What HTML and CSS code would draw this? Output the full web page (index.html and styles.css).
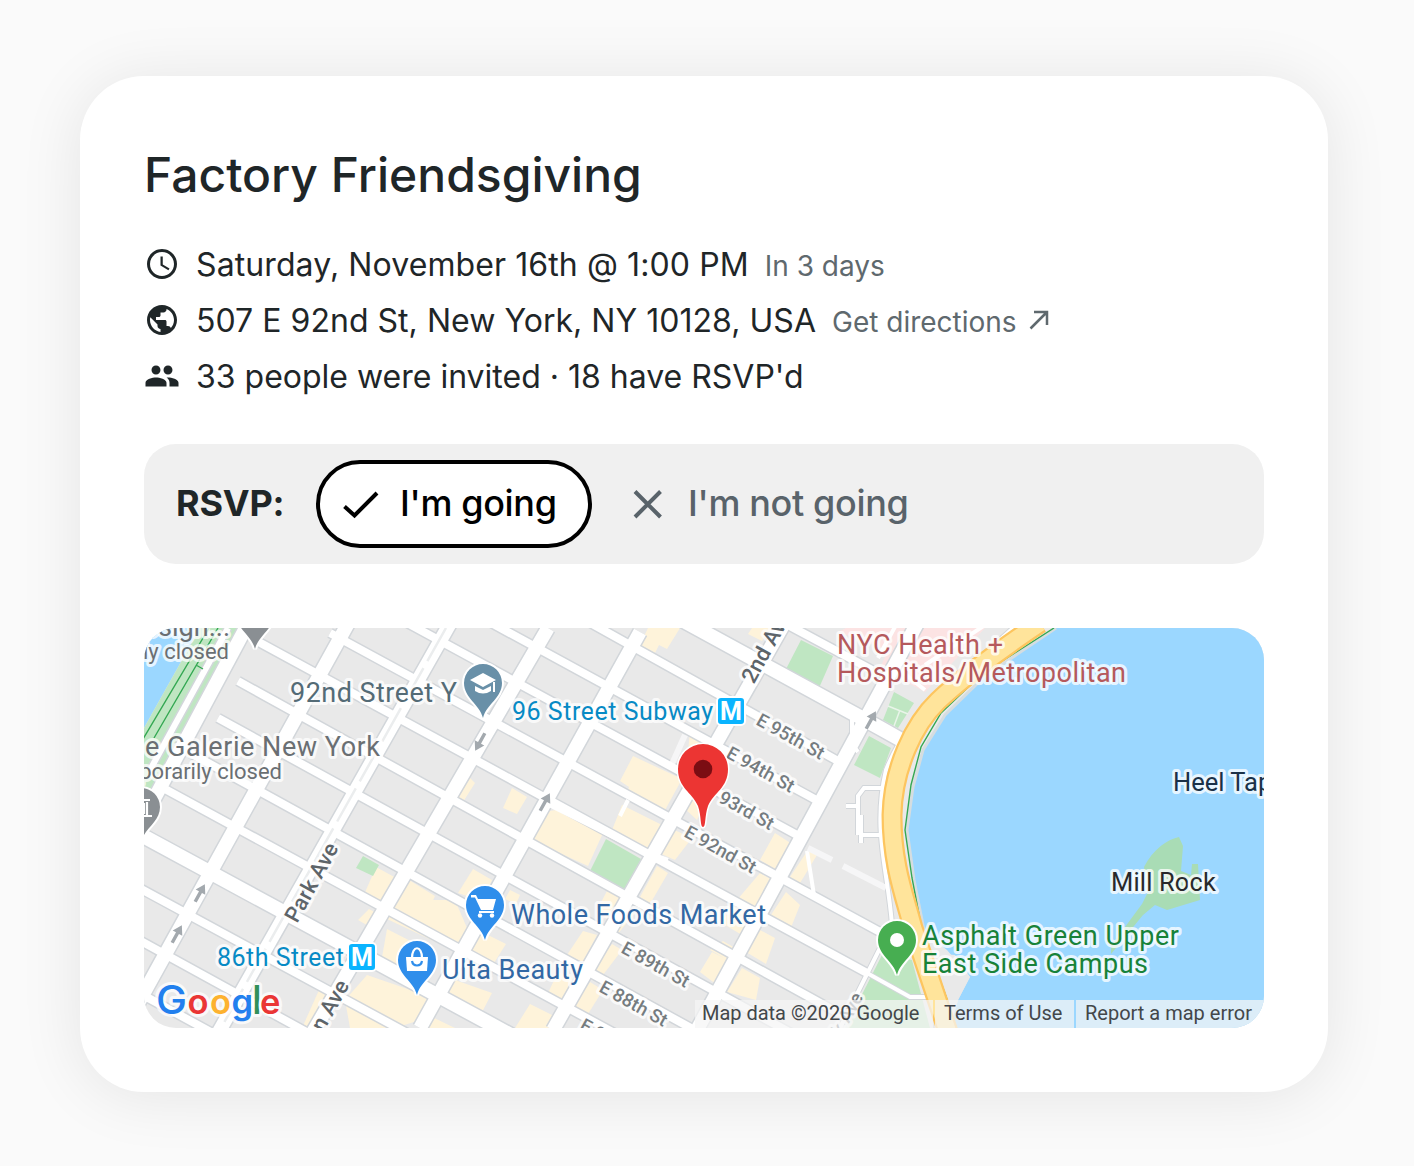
FILE: index.html
```html
<!DOCTYPE html>
<html lang="en">
<head>
<meta charset="utf-8">
<title>Factory Friendsgiving</title>
<link rel="stylesheet" href="styles.css">
</head>
<body>
<main class="card">
  <h1 class="title">Factory Friendsgiving</h1>
  <ul class="details">
    <li class="detail">
      <svg class="detail-icon" viewBox="0 0 24 24"><path d="M11.99 2C6.47 2 2 6.48 2 12s4.47 10 9.990 10C17.52 22 22 17.52 22 12S17.52 2 11.99 2zM12 20c-4.42 0-8-3.58-8-8s3.58-8 8-8 8 3.58 8 8-3.58 8-8 8zm.5-13H11v6l5.25 3.15.75-1.23-4.5-2.67z"/></svg>
      <span class="when">Saturday, November 16th @ 1:00 PM</span>
      <span class="note">In 3 days</span>
    </li>
    <li class="detail">
      <svg class="detail-icon" viewBox="0 0 24 24"><path d="M12 2C6.48 2 2 6.48 2 12s4.48 10 10 10 10-4.48 10-10S17.52 2 12 2zm-1 17.93c-3.95-.49-7-3.85-7-7.93 0-.62.08-1.21.21-1.79L9 15v1c0 1.1.9 2 2 2v1.93zm6.9-2.54c-.26-.81-1-1.39-1.9-1.39h-1v-3c0-.55-.45-1-1-1H8v-2h2c.55 0 1-.45 1-1V7h2c1.1 0 2-.9 2-2v-.41c2.93 1.19 5 4.06 5 7.410 0 2.08-.8 3.97-2.1 5.39z"/></svg>
      <span class="where">507 E 92nd St, New York, NY 10128, USA</span>
      <a class="note">Get directions <svg class="out-icon" viewBox="0 0 20 20"><path d="M1.500 18.500 17.500 2.500M5 2H18V15"/></svg></a>
    </li>
    <li class="detail">
      <svg class="detail-icon" viewBox="0 0 24 24"><path d="M16 11c1.66 0 2.99-1.34 2.99-3S17.66 5 16 5c-1.66 0-3 1.34-3 3s1.34 3 3 3zm-8 0c1.66 0 2.99-1.34 2.99-3S9.66 5 8 5C6.34 5 5 6.34 5 8s1.34 3 3 3zm0 2c-2.33 0-7 1.17-7 3.5V19h14v-2.5c0-2.33-4.67-3.5-7-3.5zm8 0c-.29 0-.62.02-.97.05 1.16.84 1.97 1.97 1.97 3.45V19h6v-2.5c0-2.33-4.67-3.5-7-3.5z"/></svg>
      <span>33 people were invited · 18 have RSVP'd</span>
    </li>
  </ul>

  <section class="rsvp">
    <strong class="rsvp-label">RSVP:</strong>
    <button class="choice chosen"><svg class="choice-icon" viewBox="0 0 40 40"><path d="M4.500 22.500 14.500 31.500 37 9"/></svg><span>I'm going</span></button>
    <button class="choice"><svg class="choice-icon" viewBox="0 0 40 40"><path d="M7 7.500 32.500 33M32.500 7.500 7 33"/></svg><span>I'm not going</span></button>
  </section>

  <section class="map">
    <svg class="map-canvas" viewBox="144 628 1120 400">
      <defs>
        <path id="pin" d="M0 35C-3.500 21-19 15-19 0A19 19 0 1 1 19 0C19 15 3.500 21 0 35Z"/>
        <path id="arrow" d="M-1.700 10V-1H-5.500L0-10 5.500-1H1.700V10Z"/>
        <g id="streets">
          <path d="M760 610 872 670M470 558 560 606 838 761M440 595 820 802M400 619 797 835M330 633 880 932M255 640 867 973M238 681 840 1014M218 718 800 1038M190 753 720 1044M165 789 640 1047M130 883 420 1040M130 935 330 1045M130 988 240 1048"/>
        </g>
        <g id="wide-streets"><path d="M660 608 880 728 912 746M130 829 520 1040"/></g>
        <g id="avenues">
          <path d="M350 620 130 1018M548 628 313 1032M640 632 420 1028"/>
          <path d="M452 620 217 1035M789 615 553 1030M918 622 698 1028"/>
          <path d="M250 620 138 829"/>
        </g>
        <g id="lanes"><path d="M852 718V744L858 752M893 922 838 1032M892 925C888 870 872 830 886 770 900 735 915 715 1020 622M867 973 910 997H928M886 788H864L858 796V835M846 806H858M861 815V843M861 835H880"/></g>
      </defs>

      <rect class="ground" x="144" y="628" width="1120" height="400"/>
      <!-- reservoir and park -->
      <path class="water" d="M144 628H200L144 728Z"/>
      <path class="park" d="M200 628H241L144 806V728Z"/>
      <path class="park-border" d="M228 628 150 770"/>
      <path class="park-edge" d="M228 628 150 770"/>
      <path class="park-path" d="M209 628 143 739M218 628 154 738M196 665 203 669"/>

      <!-- retail blocks -->
      <path class="retail" d="M648 628H680L667 649 659 645 655 653 640 645Z"/>
      <path class="retail" d="M752 628H771L762 641 748 634Z"/>
      <path class="retail" d="M633 756 682 779 664 812 627 793 629 787 620 781Z"/>
      <path class="retail" d="M690 731 708 740 701 752H688ZM684 808 692 795 705 802 697 820Z"/>
      <path class="retail" d="M543 812 556 810 603 833 588 866 531 840ZM622 805 662 825 650 850 612 830ZM470 778 475 783 463 802 457 799ZM512 788 527 797 517 814 503 808Z"/>
      <path class="retail" d="M376 867 398 879 381 904 363 897ZM369 909 380 915 372 928 358 920Z"/>
      <path class="retail" d="M409 880 435 896 425 918 452 920 440 944 387 919ZM387 929 430 951 410 978 381 963Z"/>
      <path class="retail" d="M473 869 492 880 482 901 458 893ZM428 900 455 900 470 935 448 948 400 924Z"/>
      <path class="retail" d="M478 930 506 944 487 974 467 957ZM455 980 492 993 480 1016 445 1000ZM530 1004 558 1018 552 1028H515Z"/>
      <path class="retail" d="M367 975 428 996 420 1020 395 1028H350L345 1000ZM319 990 328 995 310 1028H302ZM430 1016 455 1028H424Z"/>
      <path class="retail" d="M597 935 583 962 567 955 583 931ZM573 978 563 1003 548 993 558 972ZM607 891 622 898 610 922 597 910ZM510 890 520 895 516 904 505 899Z"/>
      <path class="retail" d="M670 828 692 838 675 860 657 852ZM657 866 668 873 650 904 640 897ZM625 908 634 914 617 935 612 930ZM612 944 622 950 603 975 593 970ZM590 982 603 990 588 1014 574 1006Z"/>
      <path class="retail" d="M775 833 795 846 780 872 760 860ZM760 873 774 881 757 912 737 900ZM738 903 750 912 742 935 720 922ZM723 941 742 952 731 962 710 950ZM712 952 732 962 717 985 700 972Z"/>
      <path class="retail" d="M808 850 817 855 797 888 788 880ZM786 892 800 905 790 930 769 918ZM760 930 775 938 766 964 746 952ZM742 968 760 978 756 1000 727 992Z"/>

      <!-- greens, hospital -->
      <path class="park" d="M801 640 833 656 819 688 785 671ZM606 839 641 859 625 891 590 871ZM869 736 891 748 880 778 854 765ZM363 856 379 865 373 876 356 868Z"/>
      <path class="hospital" d="M846 628H985L925 692 880 668 888 650 838 632Z"/>
      <path class="lane" d="M878 658 896 625M925 665 985 625M900 670 925 690"/>
      <path class="park" d="M894 692 914 703 898 728 883 720Z"/>
      <path class="park-divide" d="M888 706 908 714M900 710 894 726"/>
      <path class="park" d="M882 955 912 960 930 1028H845Z"/>

      <use href="#streets" class="street-edge"/>
      <use href="#wide-streets" class="wide-edge"/>
      <use href="#avenues" class="avenue-edge"/>
      <use href="#lanes" class="lane-edge"/>
      <path class="lane" d="M545 803 635 848 668 860M628 800 620 816M807 851 814 895"/>
      <path class="faint-lane" d="M808 848 832 860M843 866 886 888M685 735 672 764"/>
      <use href="#streets" class="street"/>
      <use href="#wide-streets" class="wide"/>
      <use href="#avenues" class="avenue"/>
      <use href="#lanes" class="lane"/>
      <path class="median" d="M446 628 221 1028"/>

      <!-- East River and FDR Drive -->
      <path class="water" d="M1056 628 985 676 945 715 923 750 913 787 906 830 914 880 924 930 933 953 955 955 970 977 958 1000 950 1028H1264V628Z"/>
      <path class="ground" d="M921 930 947 950 970 977 958 1000 950 1028H938Z"/>
      <path class="shore" d="M1056 628 985 676 945 715 923 750 913 787 907 830 914 880 924 930"/>
      <path class="shore-path" d="M1054 628 982 674 941 713 921 747 911 785 905 830 912 878 922 930 948 1002"/>
      <path class="highway-edge" d="M1040 623C1000 650 960 680 938 701 914 724 893 768 892 815 892 865 905 897 913 928L948 1032"/>
      <path class="highway" d="M1040 623C1000 650 960 680 938 701 914 724 893 768 892 815 892 865 905 897 913 928L948 1032"/>

      <!-- Mill Rock -->
      <path class="island" d="M1144 867C1153 849 1168 839 1179 837L1183 846 1181 871 1191 875 1192 864H1198L1200 900 1167 910 1155 905 1143 915 1111 954V946L1142 904 1148 892Z"/>

      <!-- one-way arrows -->
      <g class="arrows">
        <use href="#arrow" transform="translate(480 742) rotate(209)"/>
        <use href="#arrow" transform="translate(545 802) rotate(29)"/>
        <use href="#arrow" transform="translate(871 720) rotate(29)"/>
        <use href="#arrow" transform="translate(200 893) rotate(29)"/>
        <use href="#arrow" transform="translate(177 934) rotate(29)"/>
      </g>

      <!-- street names -->
      <g class="label street-name">
        <text transform="translate(787.500 742) rotate(29)">E 95th St</text>
        <text transform="translate(757.500 775) rotate(29)">E 94th St</text>
        <text transform="translate(743.500 816) rotate(29)">93rd St</text>
        <text transform="translate(717.500 855) rotate(29)">E 92nd St</text>
        <text transform="translate(652.500 970) rotate(29)">E 89th St</text>
        <text transform="translate(630.500 1009) rotate(29)">E 88th St</text>
        <text transform="translate(611 1047) rotate(29)">E 87th St</text>
        <text transform="translate(846 1029) rotate(-61)">York Ave</text>
      </g>
      <g class="label avenue-name">
        <text transform="translate(773 650) rotate(-61)">2nd Ave</text>
        <text transform="translate(318 886) rotate(-61)" textLength="87">Park Ave</text>
        <text transform="translate(316 1046) rotate(-61)">Lexington Ave</text>
      </g>

      <!-- places -->
      <g class="label">
        <g class="grey">
          <text x="230" y="636" text-anchor="end" class="place">Design...</text>
          <text x="229" y="659" text-anchor="end" class="status">Temporarily closed</text>
          <text x="145" y="756" textLength="235" class="place">e Galerie New York</text>
          <text x="282" y="779" text-anchor="end" class="status">Temporarily closed</text>
        </g>
        <text x="290" y="702" textLength="167" class="place school">92nd Street Y</text>
        <text x="512" y="720" textLength="201" class="station">96 Street Subway</text>
        <text x="217" y="966" textLength="127" class="station">86th Street</text>
        <text x="837" y="654" textLength="166" class="place health">NYC Health +</text>
        <text x="837" y="682" textLength="289" class="place health">Hospitals/Metropolitan</text>
        <text x="1173" y="791" class="natural heel">Heel Tap</text>
        <text x="1111" y="891" textLength="105" class="natural">Mill Rock</text>
        <text x="511" y="924" textLength="255" class="place shop">Whole Foods Market</text>
        <text x="442" y="979" textLength="141" class="place shop">Ulta Beauty</text>
        <text x="922" y="945" textLength="257" class="place campus">Asphalt Green Upper</text>
        <text x="922" y="973" textLength="226" class="place campus">East Side Campus</text>
      </g>

      <!-- subway badges -->
      <g class="badge">
        <rect x="717" y="697" width="28" height="28" rx="4"/><text x="731" y="720">M</text>
        <rect x="348" y="943" width="28" height="28" rx="4"/><text x="362" y="966">M</text>
      </g>

      <!-- pins -->
      <g class="pins">
        <use href="#pin" class="pin-grey" x="255" y="614"/>
        <use href="#pin" class="pin-grey" x="141" y="807"/>
        <use href="#pin" class="pin-school" x="483" y="683"/>
        <use href="#pin" class="pin-shop" x="485" y="905"/>
        <use href="#pin" class="pin-shop" x="417" y="960"/>
        <use href="#pin" class="pin-park" x="897" y="940"/>
        <path class="pin-event" d="M703 827C700 827 701.500 816 698 806 692 792 678 788 678 769A25 25 0 1 1 728 769C728 788 714 792 708 806 704.500 816 706 827 703 827Z"/>
      </g>
      <circle class="pin-event-dot" cx="703" cy="769" r="9.300"/>
      <g class="glyph">
        <circle cx="897" cy="940" r="7"/>
        <path d="M470 680 483 673 496 680 483 687ZM475 686 483 690 491 686V691Q483 696 475 691ZM493 682H495V692H493Z"/>
        <path d="M471 895H476L478 899H496L493 910H481L475 897.500H471Z"/>
        <path d="M479 911H494V913H479Z"/><circle cx="480" cy="915.500" r="2.200"/><circle cx="492" cy="915.500" r="2.200"/>
        <path d="M406 957H428L427 971H407Z"/>
        <path class="bag-handle" d="M412 958C412 945 422 945 422 958"/>
        <path class="bag-smile" d="M412 961C413 967 421 967 422 961"/>
        <path class="museum" d="M144 800H150M147 802V815M144 816H152M144 803V814"/>
      </g>

      <!-- provider mark -->
      <text class="label logo" y="1014"><tspan class="g-blue logo-tall" x="156" textLength="31" lengthAdjust="spacingAndGlyphs">G</tspan><tspan class="g-red" x="187.500">o</tspan><tspan class="g-yellow" x="210">o</tspan><tspan class="g-blue" x="231.500">g</tspan><tspan class="g-green logo-tall" x="252">l</tspan><tspan class="g-red" x="260">e</tspan></text>
    </svg>
    <div class="attribution">
      <span class="credit data">Map data ©2020 Google</span>
      <span class="credit terms">Terms of Use</span>
      <span class="credit report">Report a map error</span>
    </div>
  </section>
</main>
</body>
</html>
```
FILE: styles.css
```css
* { box-sizing: border-box; }

body {
  margin: 0;
  min-height: 1166px;
  padding: 76px 86px 74px 80px;
  background: #fafafa;
  color: #1f2628;
  font-family: Inter, "Liberation Sans", sans-serif;
}

.card {
  width: 1248px;
  height: 1016px;
  padding: 64px;
  border-radius: 64px;
  background: #fff;
  box-shadow: 0 4px 64px rgba(0, 0, 0, .09);
}

.title {
  margin: 0 0 26px;
  font-size: 48px;
  font-weight: 500;
  line-height: 70px;
}

.details {
  margin: 0 0 40px;
  padding: 0;
  list-style: none;
  font-size: 32px;
}

.detail {
  display: flex;
  align-items: center;
  gap: 16px;
  height: 56px;
  line-height: 54px;
  white-space: nowrap;
}

.detail span, .detail a { padding-top: 2px; }
.when { letter-spacing: .1px; }
.where { letter-spacing: .03px; }

.detail-icon { width: 36px; height: 36px; fill: currentColor; }

.detail .note {
  padding-top: 4px;
  color: #5f696e;
  font-size: 28px;
}

.out-icon {
  width: 20px;
  height: 20px;
  margin-left: 4px;
  vertical-align: 2px;
  fill: none;
  stroke: currentColor;
  stroke-width: 2.5;
}

.rsvp {
  display: flex;
  align-items: center;
  height: 120px;
  margin-bottom: 64px;
  padding: 16px 32px;
  border-radius: 32px;
  background: #f0f0f0;
  font-size: 36px;
}

.rsvp-label {
  width: 140px;
  padding-bottom: 2px;
  font-weight: 700;
  letter-spacing: -.2px;
}

.choice {
  display: flex;
  align-items: center;
  gap: 20px;
  height: 88px;
  padding: 0 30px 0 20px;
  border: 4px solid transparent;
  border-radius: 44px;
  background: none;
  color: #59636a;
  font: 500 36px/78px Inter, "Liberation Sans", sans-serif;
  letter-spacing: -.35px;
  white-space: nowrap;
}

.choice span { padding-bottom: 2px; }

.chosen {
  width: 276px;
  margin-right: 12px;
  border-color: #000;
  background: #fff;
  color: #000;
}

.choice-icon {
  flex: none;
  width: 40px;
  height: 40px;
  fill: none;
  stroke: currentColor;
  stroke-width: 4;
}

.map {
  position: relative;
  height: 400px;
  overflow: hidden;
  border-radius: 32px;
}

.map-canvas { display: block; width: 1120px; height: 400px; }

.ground { fill: #e9e9e9; }
.water { fill: #9bd7ff; }
.park { fill: #bfe6c2; }
.park-border { fill: none; stroke: #d2d6da; stroke-width: 9; }
.park-edge { fill: none; stroke: #fff; stroke-width: 6; }
.park-path, .shore-path { fill: none; stroke: #34a853; stroke-width: 1.4; }
.park-divide { stroke: #e9f4e9; stroke-width: 1.5; }
.retail { fill: #fef3da; }
.hospital { fill: #fce3e3; }
.shore { fill: none; stroke: #d5dde0; stroke-width: 3; }
.island { fill: #a9dcb5; }

.street, .street-edge, .wide, .wide-edge, .avenue, .avenue-edge,
.lane, .lane-edge, .faint-lane, .median, .highway, .highway-edge { fill: none; stroke: #fff; }
.street-edge, .wide-edge, .avenue-edge, .lane-edge { stroke: #d2d6da; }
.street { stroke-width: 8; }
.street-edge { stroke-width: 11; }
.wide { stroke-width: 14; }
.wide-edge { stroke-width: 17; }
.avenue { stroke-width: 13.5; }
.avenue-edge { stroke-width: 16.5; }
.lane { stroke-width: 4; }
.lane-edge { stroke-width: 6; }
.faint-lane { stroke: #f6f6f7; stroke-width: 6; }
.median { stroke: #ebedee; stroke-width: 2.5; stroke-dasharray: 38 8; }
.highway-edge { stroke: #fdc55f; stroke-width: 21; }
.highway { stroke: #ffe49b; stroke-width: 16.5; }

.arrows { fill: #a3a9ae; }

.label {
  font-family: Roboto, "Liberation Sans", sans-serif;
  paint-order: stroke;
  stroke: rgba(255, 255, 255, .75);
  stroke-width: 6px;
  stroke-linejoin: round;
}
.street-name { fill: #757c80; font-size: 18.5px; font-weight: 500; text-anchor: middle; }
.avenue-name { fill: #5d6469; font-size: 22px; font-weight: 500; text-anchor: middle; }
.place { font-size: 27px; }
.status { font-size: 22px; }
.station { fill: #078ac5; font-size: 25px; }
.natural { fill: #28292b; font-size: 25.5px; }
.heel { fill: #1a3148; }
.grey { fill: #6a6f73; }
.school { fill: #546b76; }
.health { fill: #b5595c; }
.shop { fill: #3268a4; }
.campus { fill: #178239; }

.badge rect { fill: #0ab4ff; stroke: #fff; stroke-width: 2; }
.badge text {
  fill: #fff;
  font: 700 25px Roboto, "Liberation Sans", sans-serif;
  text-anchor: middle;
}

.pins { stroke: #fff; stroke-width: 4px; paint-order: stroke; }
.pin-grey { fill: #8a8f93; }
.pin-school { fill: #6990a8; }
.pin-shop { fill: #2f8eeb; }
.pin-park { fill: #47ae51; }
.pin-event { fill: #ec3533; stroke-width: 3px; }
.pin-event-dot { fill: #7b0d13; }
.glyph { fill: #fff; }
.bag-handle, .bag-smile, .museum { fill: none; stroke: #fff; stroke-width: 2.2; }
.bag-smile { stroke: #2f8eeb; }

.logo { font-family: Inter, "Liberation Sans", sans-serif; font-size: 34.5px; font-weight: 600; }
.logo-tall { font-size: 39px; font-weight: 500; }
.g-blue { fill: #2280ee; }
.g-red { fill: #ea3635; }
.g-yellow { fill: #fdb22f; }
.g-green { fill: #31905a; }

/* sits over the bottom edge of the map */
.attribution {
  position: absolute;
  right: 0;
  bottom: 0;
  display: flex;
  gap: 2px;
  height: 28px;
  color: #43474a;
  font: 20px/27px Roboto, "Liberation Sans", sans-serif;
  white-space: nowrap;
}
.credit { background: rgba(245, 245, 245, .72); }
.data { width: 238px; padding-left: 7px; letter-spacing: -.02px; }
.terms { width: 139px; padding-left: 9px; }
.report { width: 188px; padding-left: 9px; }
```
